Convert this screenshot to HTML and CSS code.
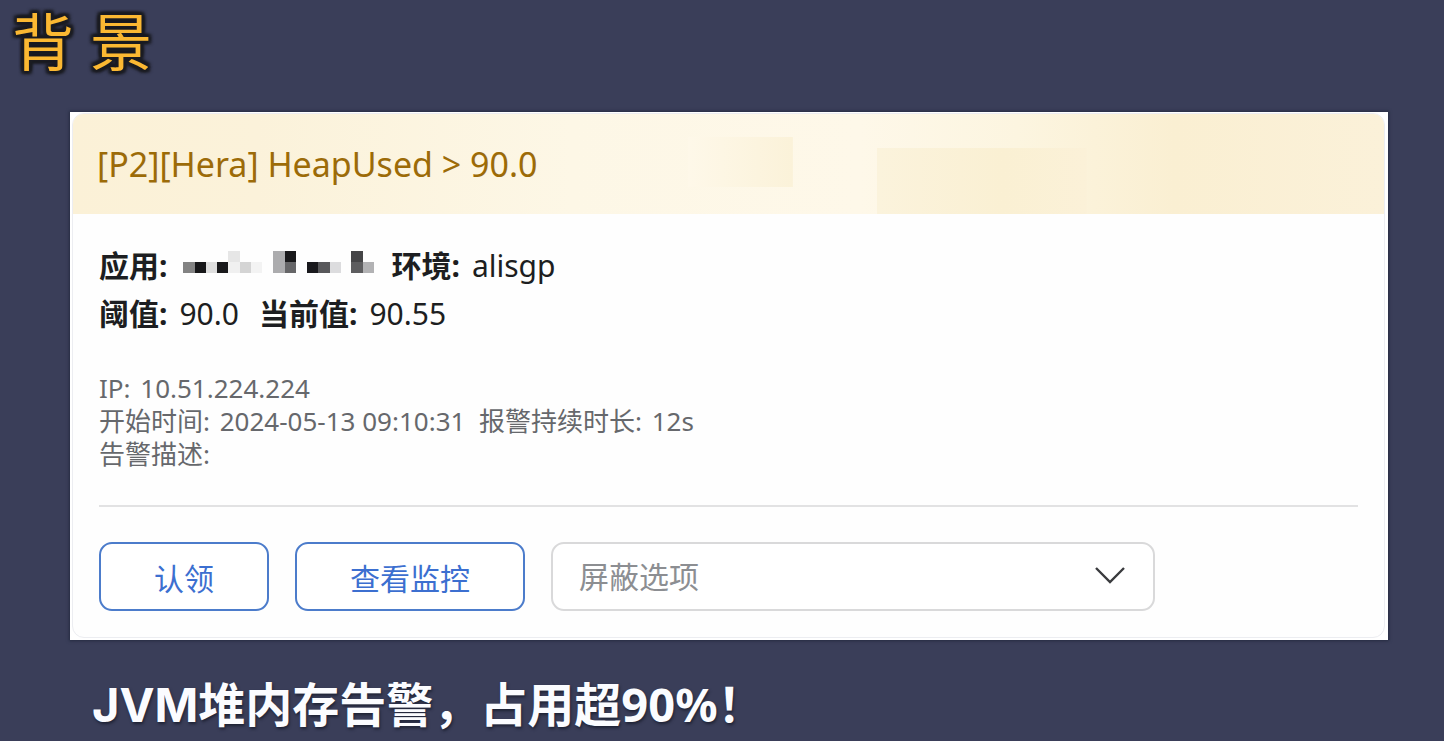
FILE: index.html
```html
<!DOCTYPE html>
<html lang="zh-CN">
<head>
<meta charset="utf-8">
<title>背景</title>
<link rel="stylesheet" href="styles.css">
</head>
<body>
<main class="slide">
  <h1 class="slide-title">背 景</h1>
  <section class="frame">
    <article class="card">
      <header class="card-header">
        <h2 class="card-title">[P2][Hera] HeapUsed &gt; 90.0</h2>
      </header>
      <div class="card-body">
        <div class="summary">
          <p class="line">
            <b>应用:</b>
            <svg class="mosaic" viewBox="0 0 192 24" role="img" aria-label="已打码">
              <g shape-rendering="crispEdges">
                <rect x="0" y="12" width="12" height="11" fill="#838383"/>
                <rect x="12" y="12" width="11" height="11" fill="#171719"/>
                <rect x="23" y="12" width="11" height="11" fill="#dedede"/>
                <rect x="34" y="12" width="11" height="11" fill="#19191b"/>
                <rect x="45" y="1" width="12" height="11" fill="#e6e6e6"/>
                <rect x="45" y="12" width="12" height="11" fill="#f0f0f0"/>
                <rect x="57" y="12" width="11" height="11" fill="#d4d4d4"/>
                <rect x="68" y="12" width="11" height="11" fill="#f3f3f3"/>
                <rect x="90" y="1" width="12" height="22" fill="#acacae"/>
                <rect x="102" y="1" width="11" height="11" fill="#19191b"/>
                <rect x="102" y="12" width="11" height="11" fill="#666668"/>
                <rect x="124" y="12" width="11" height="11" fill="#19191d"/>
                <rect x="135" y="12" width="12" height="11" fill="#58585b"/>
                <rect x="147" y="12" width="11" height="11" fill="#dcdcde"/>
                <rect x="168" y="1" width="12" height="11" fill="#454547"/>
                <rect x="168" y="12" width="12" height="11" fill="#5d5d5f"/>
                <rect x="180" y="12" width="11" height="11" fill="#b2b2b4"/>
              </g>
            </svg>
            <b>环境:</b>
            <span>alisgp</span>
          </p>
          <p class="line">
            <b>阈值:</b>
            <span>90.0</span>
            <b class="next">当前值:</b>
            <span>90.55</span>
          </p>
        </div>
        <div class="details">
          <p><span class="label">IP:</span> 10.51.224.224</p>
          <p><span class="label">开始时间:</span> 2024-05-13 09:10:31&nbsp; <span class="label">报警持续时长:</span> 12s</p>
          <p><span class="label">告警描述:</span></p>
        </div>
        <div class="actions">
          <button class="button" type="button">认领</button>
          <button class="button" type="button">查看监控</button>
          <div class="picker">
            <select class="picker-select" aria-label="屏蔽选项">
              <option>屏蔽选项</option>
            </select>
            <svg class="chevron" viewBox="0 0 32 20" aria-hidden="true">
              <path d="M2 2 L16 16 L30 2" fill="none" stroke="#3a3b3e" stroke-width="2.4"/>
            </svg>
          </div>
        </div>
      </div>
    </article>
  </section>
  <p class="caption"><span class="acronym">JVM</span>堆内存告警，占用超90%！</p>
</main>
</body>
</html>
```
FILE: styles.css
```css
* {
  box-sizing: border-box;
}

body,
h1,
h2,
p {
  margin: 0;
}

body {
  min-height: 100vh;
  background: #3a3e59;
  font-family: "Noto Sans", "Noto Sans CJK SC", sans-serif;
  overflow-x: hidden;
}

.slide {
  padding: 8px 56px 0 70px;
}

.slide-title {
  margin-left: -58px;
  height: 104px;
  color: #fbb832;
  font-family: "Noto Sans", "Noto Sans CJK SC", sans-serif;
  font-size: 62px;
  font-weight: 400;
  line-height: 68px;
  text-shadow: 3px 0 2px #1b1c22, -3px 0 2px #1b1c22, 0 3px 2px #1b1c22,
    0 -3px 2px #1b1c22, 3px 3px 3px #1b1c22, -3px 3px 3px #1b1c22,
    3px -3px 3px #1b1c22, -3px -3px 3px #1b1c22;
}

.frame {
  padding: 1px 3px 2px 2px;
  background: #fff;
  box-shadow: 0 0 3px 1px #252b40;
}

.card {
  overflow: hidden;
  border: 1px solid #ecedf1;
  border-radius: 12px;
  background: #fefefe;
}

.card-header {
  padding: 0 24px;
  background:
    linear-gradient(90deg, #fef8e9, #fbf2d9) 51% 45% / 8% 50% no-repeat,
    linear-gradient(90deg, #fbf3dc, #faf0d3 60%, #fbf1d8) 73% 100% / 16% 66% no-repeat,
    linear-gradient(90deg, #fbf1d7 0, #fbf2da 14%, #fdf7e6 38%, #fef8e9 60%, #fcf5e0 72%, #faefd2 84%, #fbf1d9 100%);
}

.card-title {
  color: #9c6b08;
  font-size: 34px;
  font-weight: 400;
  line-height: 100px;
}

.card-body {
  padding: 28px 26px 26px;
}

.line {
  display: flex;
  align-items: center;
  gap: 12px;
  color: #1d1e21;
  font-size: 30px;
  line-height: 48px;
}

.mosaic {
  width: 192px;
  height: 24px;
  margin: 0 4px 8px 4px;
}

.next {
  margin-left: 8px;
}

.details {
  margin-top: 34px;
  padding-bottom: 34px;
  border-bottom: 2px solid #e2e2e3;
  color: #66686c;
  font-size: 26px;
  line-height: 33px;
}

.label {
  margin-right: 3px;
}

.actions {
  display: flex;
  gap: 26px;
  margin-top: 35px;
}

.button {
  height: 69px;
  padding: 0 53px;
  border: 2px solid #4c7ccb;
  border-radius: 13px;
  background: #fff;
  color: #3c6fd0;
  font: inherit;
  font-size: 30px;
}

.picker {
  position: relative;
  flex: 0 1 48%;
}

.picker-select {
  width: 100%;
  height: 69px;
  padding: 0 26px;
  border: 2px solid #d9d9da;
  border-radius: 13px;
  appearance: none;
  background: #fff;
  color: #8c8e92;
  font: inherit;
  font-size: 30px;
}

.chevron {
  position: absolute;
  top: 24px;
  right: 29px;
  width: 32px;
  height: 20px;
  pointer-events: none;
}

.caption {
  margin: 30px 0 0 22px;
  color: #fbfcff;
  font-size: 47px;
  font-weight: 700;
  line-height: 68px;
  text-shadow: 1px 2px 3px #1e2234;
}

.acronym {
  font-family: Inter, sans-serif;
}
```
